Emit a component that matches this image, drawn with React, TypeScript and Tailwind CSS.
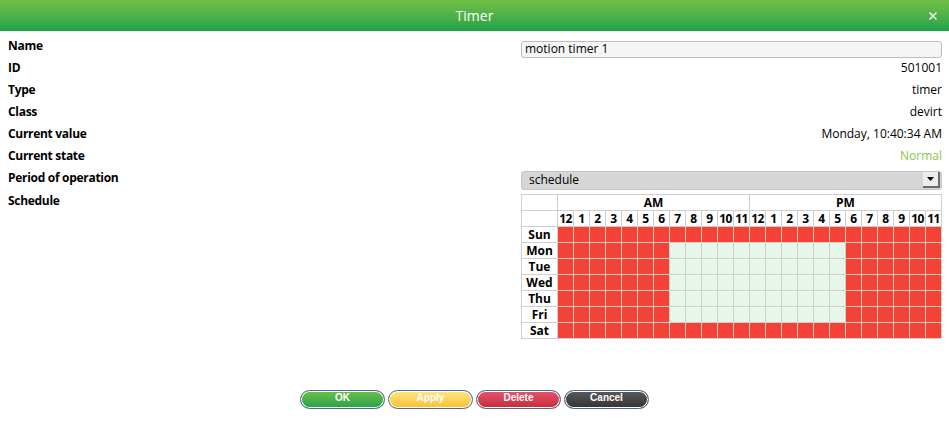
import React from 'react';

const labels = ['Name', 'ID', 'Type', 'Class', 'Current value', 'Current state', 'Period of operation'];
const days = ['Sun', 'Mon', 'Tue', 'Wed', 'Thu', 'Fri', 'Sat'];
const hours = ['12', '1', '2', '3', '4', '5', '6', '7', '8', '9', '10', '11'];

// true = active (red), false = off (green)
function isRed(day: number, hour: number) {
  if (day === 0 || day === 6) return true;
  return hour < 7 || hour > 17;
}

function ValueCell({ index }: { index: number }) {
  if (index === 0) {
    return (
      <div className="w-[421px] h-[17px] mt-[6px] bg-[#f5f5f5] border border-[#bdbdbd] rounded-[3px] px-[3px] flex items-center text-[12px] text-black leading-none">
        motion timer 1
      </div>
    );
  }
  if (index === 6) {
    return (
      <div className="w-[421px] h-[19px] mt-[4px] bg-[#d6d6d6] border border-[#c4c4c4] rounded-[3px] pl-[7px] pr-[1px] flex items-center justify-between text-[12px] text-black leading-none">
        <span>schedule</span>
        <span className="w-[17px] h-[16px] bg-[#ececec] border-r-2 border-b-2 border-[#6b6b6b] flex items-center justify-center">
          <svg width="7" height="4" viewBox="0 0 7 4">
            <path d="M0 0h7L3.5 4z" fill="#000" />
          </svg>
        </span>
      </div>
    );
  }
  const values = ['', '501001', 'timer', 'devirt', 'Monday, 10:40:34 AM', 'Normal'];
  return (
    <span className={index === 5 ? 'text-[#8bc34a]' : 'text-black'}>{values[index]}</span>
  );
}

function Schedule() {
  return (
    <div className="grid grid-cols-[35px_repeat(24,15px)] gap-px bg-[#cfcfcf] border border-[#cfcfcf] w-[421px] text-[12px] font-bold leading-none text-black">
      <div className="bg-white h-[15px]" />
      <div className="bg-white h-[15px] col-span-12 flex items-center justify-center">AM</div>
      <div className="bg-white h-[15px] col-span-12 flex items-center justify-center">PM</div>
      <div className="bg-white h-[15px]" />
      {[...hours, ...hours].map((h, i) => (
        <div key={i} className="bg-white h-[15px] flex items-center justify-center tracking-[-0.5px]">
          {h}
        </div>
      ))}
      {days.map((d, di) => (
        <React.Fragment key={d}>
          <div className="bg-white h-[15px] flex items-center justify-center">{d}</div>
          {Array.from({ length: 24 }).map((_, hi) => (
            <div key={hi} className={isRed(di, hi) ? 'bg-[#f44336] h-[15px]' : 'bg-[#e8f5e9] h-[15px]'} />
          ))}
        </React.Fragment>
      ))}
    </div>
  );
}

function Button({ label, cls }: { label: string; cls: string }) {
  return (
    <button
      className={`w-[85px] h-[19px] rounded-full border border-[#4d6a86] shadow-[inset_0_0_0_1px_#ffffff] text-white text-[10px] font-bold leading-none pb-[3px] ${cls}`}
      style={{ fontFamily: '"Liberation Sans", Arial, sans-serif' }}
    >
      {label}
    </button>
  );
}

export default function App() {
  return (
    <div className="w-[949px] h-[424px] bg-white flex flex-col" style={{ fontFamily: '"Open Sans", "Noto Sans", sans-serif' }}>
      <div className="h-[31px] bg-gradient-to-b from-[#72c045] to-[#18a149] flex items-center justify-center relative">
        <span className="text-white text-[14px] leading-none">Timer</span>
        <svg className="absolute right-[12px] top-[12px]" width="8" height="8" viewBox="0 0 8 8">
          <path d="M0.5 0.5l7 7M7.5 0.5l-7 7" stroke="#ffffff" strokeWidth="1.4" />
        </svg>
      </div>
      <div className="pl-[8px] pr-[7px] pt-[4px] text-[12px]">
        {labels.map((l, i) => (
          <div key={l} className="h-[22px] flex items-center justify-between">
            <span className="font-bold text-black tracking-[-0.3px]">{l}</span>
            <ValueCell index={i} />
          </div>
        ))}
        <div className="flex justify-between mt-[5px]">
          <span className="font-bold text-black tracking-[-0.3px] -mt-[2px]">Schedule</span>
          <Schedule />
        </div>
      </div>
      <div className="flex justify-center gap-[3px] mt-[51px]">
        <Button label="OK" cls="bg-gradient-to-b from-[#6cc048] to-[#1ea248]" />
        <Button label="Apply" cls="bg-gradient-to-b from-[#ffe680] to-[#f9bf2c]" />
        <Button label="Delete" cls="bg-gradient-to-b from-[#e85470] to-[#c52a38]" />
        <Button label="Cancel" cls="bg-gradient-to-b from-[#5a5a5a] to-[#333333]" />
      </div>
    </div>
  );
}
